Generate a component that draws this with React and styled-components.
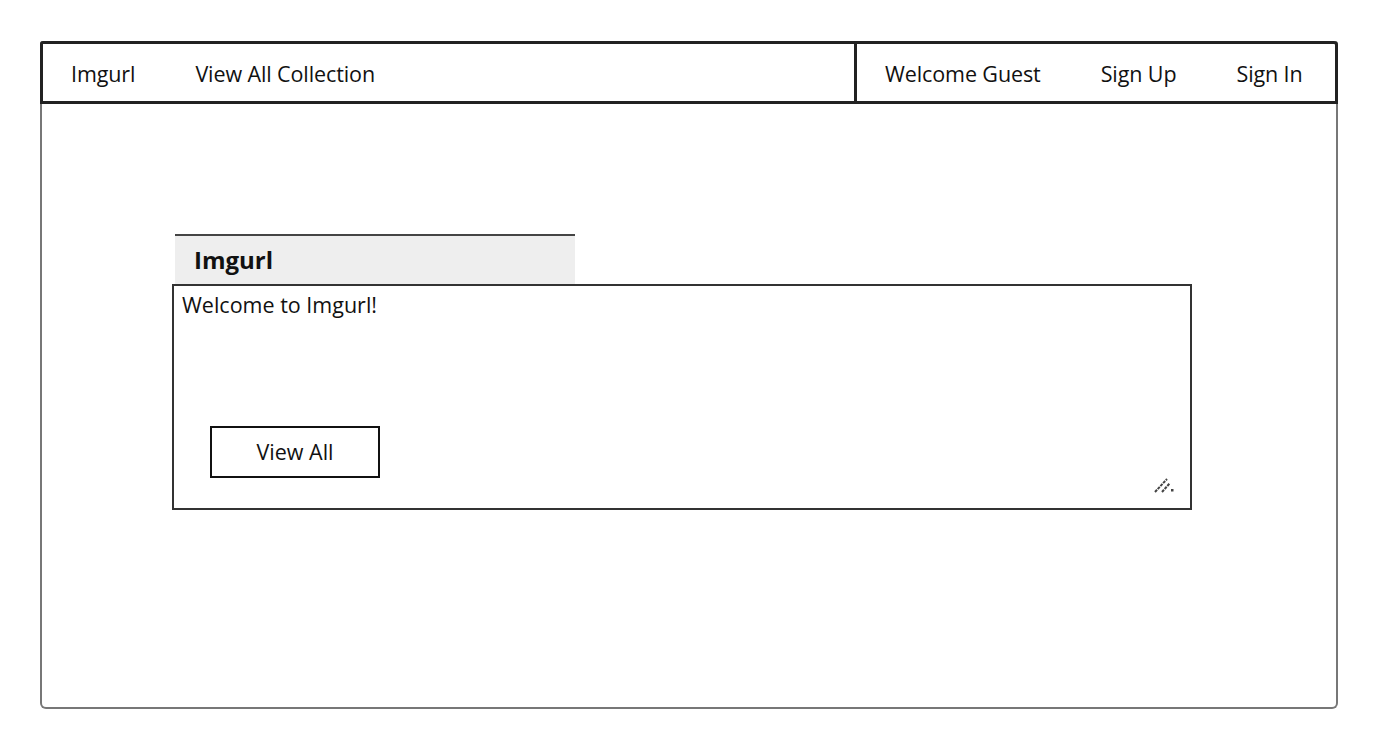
import React from "react";
import styled, { createGlobalStyle } from "styled-components";

const Global = createGlobalStyle`
  html, body { margin: 0; padding: 0; background: #fff; }
  body { font-family: "Open Sans", "Noto Sans", sans-serif; color: #111; }
`;

const Frame = styled.div`
  box-sizing: border-box;
  margin: 41px 0 0 40px;
  width: 1298px;
  height: 668px;
  border: 2px solid #777;
  border-top: none;
  border-radius: 3px 3px 6px 6px;
  display: flex;
  flex-direction: column;
`;

const Nav = styled.nav`
  display: flex;
  height: 63px;
  margin: 0 -2px;
`;

const NavGroup = styled.div`
  box-sizing: border-box;
  display: flex;
  align-items: center;
  border: 3px solid #222;
  border-radius: ${(p) => (p.$right ? "0 4px 0 0" : "3px 0 0 0")};
  ${(p) => (p.$right ? "width: 484px; margin-left: -3px;" : "flex: 1;")}
  padding: 2px 0 0 28px;
  gap: ${(p) => p.$gap}px;
`;

const NavLink = styled.span`
  font-size: 21.5px;
  line-height: 1;
  white-space: nowrap;
  letter-spacing: -0.1px;
`;

const Main = styled.main`
  flex: 1;
  padding: 130px 0 0 130px;
`;

const TabHead = styled.div`
  box-sizing: border-box;
  margin-left: 3px;
  width: 400px;
  height: 50px;
  background: #eeeeee;
  border-top: 2px solid #444;
  padding: 7px 0 0 19px;
  font-size: 24px;
  font-weight: 700;
`;

const Panel = styled.div`
  box-sizing: border-box;
  position: relative;
  width: 1020px;
  height: 226px;
  border: 2px solid #333;
  padding: 4px 0 0 8px;
  font-size: 21.5px;
  line-height: 30px;
`;

const Button = styled.button`
  box-sizing: border-box;
  display: block;
  margin: 106px 0 0 28px;
  width: 170px;
  height: 52px;
  border: 2px solid #111;
  background: #fff;
  font-family: inherit;
  font-size: 21.5px;
  color: #111;
  padding: 0 0 2px;
`;

const Grip = styled.svg`
  position: absolute;
  right: 14px;
  bottom: 14px;
`;

export default function App() {
  return (
    <>
      <Global />
      <Frame>
        <Nav>
          <NavGroup $gap={60}>
            <NavLink>Imgurl</NavLink>
            <NavLink>View All Collection</NavLink>
          </NavGroup>
          <NavGroup $right $gap={60}>
            <NavLink>Welcome Guest</NavLink>
            <NavLink>Sign Up</NavLink>
            <NavLink>Sign In</NavLink>
          </NavGroup>
        </Nav>
        <Main>
          <TabHead>Imgurl</TabHead>
          <Panel>
            Welcome to Imgurl!
            <Button>View All</Button>
            <Grip width="22" height="20" viewBox="0 0 22 20">
              <path d="M1 18 L13 5 M8 18 L16 9" stroke="#444" strokeWidth="2" strokeDasharray="3 1" fill="none" />
              <rect x="17" y="15" width="2.5" height="2.5" fill="#444" />
            </Grip>
          </Panel>
        </Main>
      </Frame>
    </>
  );
}
